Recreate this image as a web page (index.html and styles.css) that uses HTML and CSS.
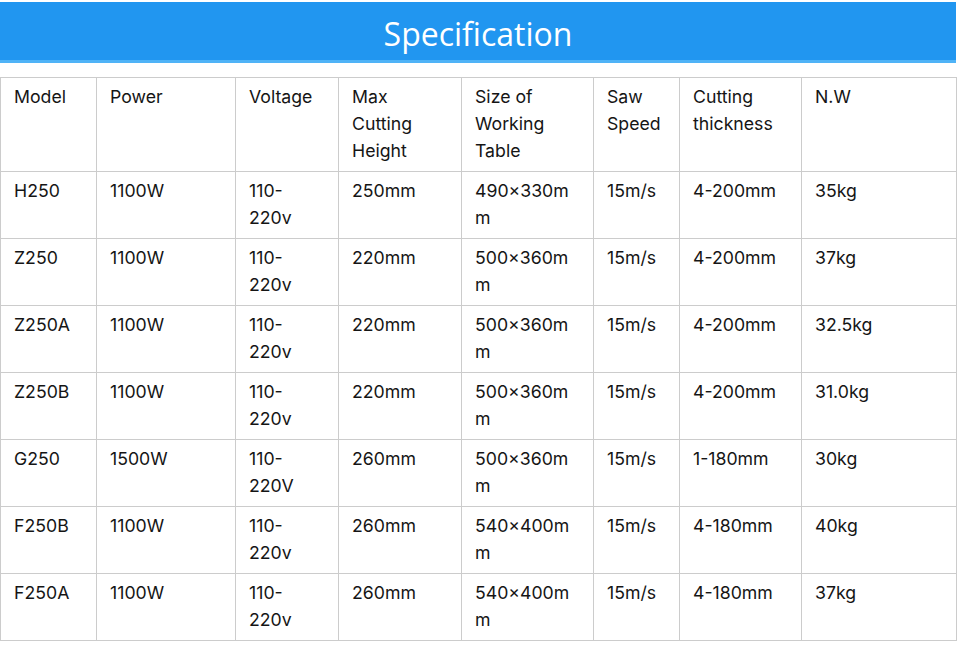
FILE: index.html
```html
<!DOCTYPE html>
<html>
<head>
<meta charset="utf-8">
<link rel="stylesheet" href="styles.css">
</head>
<body>
<div class="page">
  <div class="banner"><h1 class="title">Specification</h1></div>
  <table class="spec">
    <colgroup>
      <col style="width:96px"><col style="width:139px"><col style="width:103px"><col style="width:123px">
      <col style="width:132px"><col style="width:86px"><col style="width:122px"><col style="width:155px">
    </colgroup>
    <tr class="head"><td>Model</td><td>Power</td><td>Voltage</td><td>Max Cutting Height</td><td>Size of Working Table</td><td>Saw Speed</td><td>Cutting thickness</td><td>N.W</td></tr>
    <tr><td>H250</td><td>1100W</td><td>110-220v</td><td>250mm</td><td>490×330mm</td><td>15m/s</td><td>4-200mm</td><td>35kg</td></tr>
    <tr><td>Z250</td><td>1100W</td><td>110-220v</td><td>220mm</td><td>500×360mm</td><td>15m/s</td><td>4-200mm</td><td>37kg</td></tr>
    <tr><td>Z250A</td><td>1100W</td><td>110-220v</td><td>220mm</td><td>500×360mm</td><td>15m/s</td><td>4-200mm</td><td>32.5kg</td></tr>
    <tr><td>Z250B</td><td>1100W</td><td>110-220v</td><td>220mm</td><td>500×360mm</td><td>15m/s</td><td>4-200mm</td><td>31.0kg</td></tr>
    <tr><td>G250</td><td>1500W</td><td>110-220V</td><td>260mm</td><td>500×360mm</td><td>15m/s</td><td>1-180mm</td><td>30kg</td></tr>
    <tr><td>F250B</td><td>1100W</td><td>110-220v</td><td>260mm</td><td>540×400mm</td><td>15m/s</td><td>4-180mm</td><td>40kg</td></tr>
    <tr><td>F250A</td><td>1100W</td><td>110-220v</td><td>260mm</td><td>540×400mm</td><td>15m/s</td><td>4-180mm</td><td>37kg</td></tr>
  </table>
</div>
</body>
</html>
```
FILE: styles.css
```css
html, body { margin: 0; padding: 0; background: #fff; }
.page { width: 956px; padding-top: 2px; }
.banner {
  background: #2196f0;
  border-bottom: 3px solid #4fb3f7;
  height: 58px;
  display: flex;
  align-items: center;
  justify-content: center;
}
.title {
  margin: 0;
  color: #fff;
  font-family: "Open Sans", "Noto Sans", sans-serif;
  font-weight: 400;
  font-size: 32px;
  line-height: 1;
  padding-top: 6px;
}
.spec {
  margin-top: 14px;
  width: 956px;
  border-collapse: collapse;
  table-layout: fixed;
  font-family: Inter, "Noto Sans", sans-serif;
  font-size: 17.7px;
  line-height: 27px;
  color: #151515;
}
.spec td {
  border: 1px solid #ccc;
  padding: 5px 16px 7px 13px;
  vertical-align: top;
  overflow-wrap: anywhere;
}
```
